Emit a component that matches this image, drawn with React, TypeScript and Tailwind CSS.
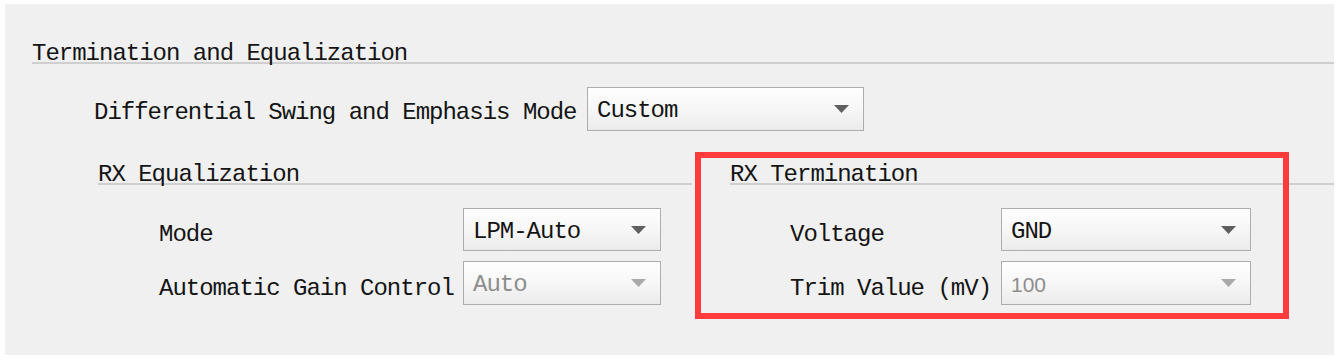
import React from "react";

const mono = "font-[Liberation_Mono,Courier_New,monospace] text-[24px] tracking-[-1px]";

function Arrow({ disabled }: { disabled?: boolean }) {
  return (
    <svg width="15" height="8" viewBox="0 0 15 8" className="shrink-0">
      <polygon points="0,0 15,0 7.5,8" fill={disabled ? "#a9a9a9" : "#5f5f5f"} />
    </svg>
  );
}

function Combo({
  value,
  width,
  height = "h-[43px]",
  disabled,
  sans,
}: {
  value: string;
  width: string;
  height?: string;
  disabled?: boolean;
  sans?: boolean;
}) {
  return (
    <div
      className={`${width} ${height} shrink-0 border border-[#adadad] bg-linear-to-b from-[#fefefe] via-[#f7f7f7] to-[#ebebeb] flex items-center justify-between pl-[9px] pr-[14px]`}
    >
      <span
        className={
          sans
            ? `font-[Liberation_Sans,Arial,sans-serif] text-[21px] leading-[23px] pt-[3px] ${disabled ? "text-[#8d8d8d]" : "text-[#141414]"}`
            : `${mono} leading-[23px] pt-[3px] ${disabled ? "text-[#8d8d8d]" : "text-[#141414]"}`
        }
      >
        {value}
      </span>
      <Arrow disabled={disabled} />
    </div>
  );
}

function Label({ text, width, pad }: { text: string; width: string; pad: string }) {
  return (
    <div className={`${width} ${pad} shrink-0 ${mono} leading-[23px] text-[#141414] whitespace-nowrap`}>
      {text}
    </div>
  );
}

const header = `border-b-2 border-[#cfcfcf] ${mono} pt-[6px] leading-[17px] text-[#141414] whitespace-nowrap`;

export default function App() {
  return (
    <div className="w-[1343px] h-[360px] bg-white pl-[5px] pt-[4px] overflow-hidden">
      <div className="relative w-[1329px] h-[351px] bg-[#f0f0f0] overflow-hidden">
        {/* Section title */}
        <div className={`mt-[35px] ml-[27px] ${header}`}>Termination and Equalization</div>

        {/* Differential swing row */}
        <div className="mt-[23px] ml-[89px] flex items-center h-[44px]">
          <Label text="Differential Swing and Emphasis Mode" width="w-[493px]" pad="pt-[7px]" />
          <Combo value="Custom" width="w-[277px]" height="h-[44px]" />
        </div>

        {/* Two columns */}
        <div className="mt-[29px] ml-[93px] flex gap-[38px]">
          <div className="w-[594px] shrink-0">
            <div className={header}>RX Equalization</div>
            <div className="mt-[23px] flex flex-col gap-[10px]">
              <div className="flex items-center pl-[61px]">
                <Label text="Mode" width="w-[304px]" pad="pt-[10px]" />
                <Combo value="LPM-Auto" width="w-[198px]" />
              </div>
              <div className="flex items-center pl-[61px]">
                <Label text="Automatic Gain Control" width="w-[304px]" pad="pt-[10px]" />
                <Combo value="Auto" width="w-[198px]" height="h-[44px]" disabled />
              </div>
            </div>
          </div>

          <div className="flex-1">
            <div className={header}>RX Termination</div>
            <div className="mt-[23px] flex flex-col gap-[10px]">
              <div className="flex items-center pl-[60px]">
                <Label text="Voltage" width="w-[211px]" pad="pt-[10px]" />
                <Combo value="GND" width="w-[250px]" />
              </div>
              <div className="flex items-center pl-[60px]">
                <Label text="Trim Value (mV)" width="w-[211px]" pad="pt-[10px]" />
                <Combo value="100" width="w-[250px]" height="h-[44px]" disabled sans />
              </div>
            </div>
          </div>
        </div>

        {/* Red highlight overlay */}
        <div className="absolute left-[690px] top-[148px] w-[594px] h-[167px] border-[6px] border-[#ff3b3b] pointer-events-none" />
      </div>
    </div>
  );
}
